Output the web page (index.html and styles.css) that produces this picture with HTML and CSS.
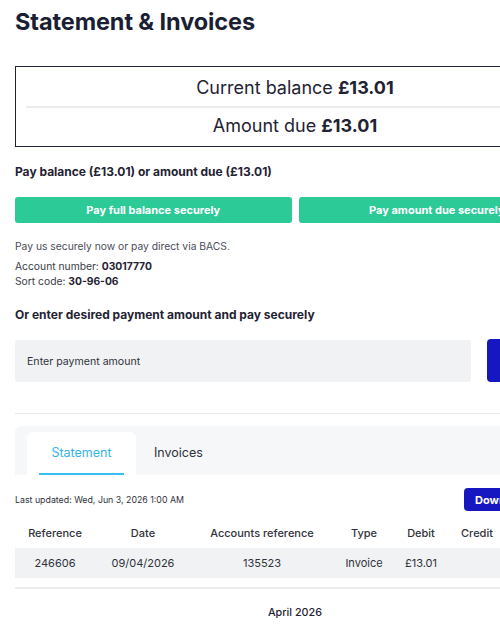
FILE: index.html
```html
<!DOCTYPE html>
<html lang="en">
<head>
<meta charset="utf-8">
<title>Statement &amp; Invoices</title>
<link rel="stylesheet" href="styles.css">
</head>
<body>
<main class="page">
  <h1 class="title">Statement &amp; Invoices</h1>

  <section class="balance">
    <div class="balance-row first">Current balance <strong>£13.01</strong></div>
    <div class="balance-divider"></div>
    <div class="balance-row second">Amount due <strong>£13.01</strong></div>
  </section>

  <h2 class="sub">Pay balance (£13.01) or amount due (£13.01)</h2>

  <div class="pay-buttons">
    <button class="btn-green">Pay full balance securely</button>
    <button class="btn-green">Pay amount due securely</button>
  </div>

  <p class="note">Pay us securely now or pay direct via BACS.</p>
  <p class="bank">Account number: <strong>03017770</strong><br>Sort code: <strong>30-96-06</strong></p>

  <h2 class="sub sub-2">Or enter desired payment amount and pay securely</h2>

  <div class="amount-row">
    <div class="amount-input">Enter payment amount</div>
    <button class="btn-blue big">Pay</button>
  </div>

  <hr class="rule">

  <nav class="tabs">
    <div class="tab active"><span class="tab-label">Statement</span></div>
    <div class="tab"><span class="tab-label">Invoices</span></div>
  </nav>

  <div class="toolbar">
    <span class="updated">Last updated: Wed, Jun 3, 2026 1:00 AM</span>
    <button class="btn-blue small">Download</button>
  </div>

  <table class="statement">
    <colgroup>
      <col class="c1"><col class="c2"><col class="c3"><col class="c4"><col class="c5"><col class="c6"><col class="c7">
    </colgroup>
    <thead>
      <tr><th>Reference</th><th>Date</th><th>Accounts reference</th><th>Type</th><th>Debit</th><th>Credit</th><th>Balance</th></tr>
    </thead>
    <tbody>
      <tr><td>246606</td><td>09/04/2026</td><td>135523</td><td>Invoice</td><td>£13.01</td><td></td><td>£13.01</td></tr>
    </tbody>
  </table>

  <hr class="rule rule-2">

  <div class="month">April 2026</div>
</main>
</body>
</html>
```

FILE: styles.css
```css
*, *::before, *::after {
  box-sizing: border-box;
}

html, body {
  margin: 0;
  padding: 0;
  background: #ffffff;
  overflow: hidden;
}

body {
  font-family: Inter, "Noto Sans", sans-serif;
  color: #2b2f3a;
}

.page {
  width: 590px;
  padding: 7px 15px 0;
}

.title {
  margin: 0;
  font-size: 23.5px;
  line-height: 30px;
  font-weight: 700;
  color: #1a1f33;
  letter-spacing: -0.1px;
}

.balance {
  margin-top: 29px;
  border: 1px solid #1d2337;
  display: flex;
  flex-direction: column;
}

.balance-row {
  text-align: center;
  font-size: 18px;
  line-height: 22px;
  color: #1f2333;
}

.balance-row strong {
  font-weight: 700;
}

.balance-row.first {
  padding: 10px 0 7px;
}

.balance-row.second {
  padding: 7px 0 9px;
}

.balance-divider {
  height: 2px;
  margin: 0 10px;
  background: #ededee;
}

.sub {
  margin: 16px 0 0;
  font-size: 12px;
  line-height: 18px;
  font-weight: 700;
  color: #1f2333;
}

.sub-2 {
  margin-top: 17px;
}

.pay-buttons {
  margin-top: 16px;
  display: grid;
  grid-template-columns: 1fr 1fr;
  gap: 7px;
}

.btn-green {
  height: 26px;
  border: 0;
  border-radius: 3px;
  background: #2cca97;
  color: #ffffff;
  font-family: inherit;
  font-size: 11px;
  font-weight: 700;
  padding: 0;
  white-space: nowrap;
}

.note {
  margin: 15px 0 0;
  font-size: 10.3px;
  line-height: 16px;
  color: #4a4d57;
}

.bank {
  margin: 5px 0 0;
  font-size: 10.3px;
  line-height: 15px;
  color: #3a3d47;
}

.bank strong {
  color: #1f2333;
  font-weight: 700;
}

.amount-row {
  margin-top: 16px;
  display: flex;
  gap: 16px;
}

.amount-input {
  width: 456px;
  height: 42px;
  padding: 0 12px;
  background: #f1f2f4;
  border-radius: 2px;
  display: flex;
  align-items: center;
  font-size: 10.6px;
  color: #2f323b;
}

.btn-blue {
  border: 0;
  border-radius: 4px;
  background: #1717c2;
  color: #ffffff;
  font-family: inherit;
  font-weight: 700;
  font-size: 11px;
  white-space: nowrap;
}

.btn-blue.big {
  flex: 1;
  height: 43px;
  margin-top: -1px;
}

.rule {
  margin: 31px 0 0;
  border: 0;
  height: 1px;
  background: #e6e7e9;
}

.tabs {
  margin-top: 12px;
  background: #f6f7f9;
  border-radius: 6px 6px 0 0;
  padding: 6px 12px 0;
  display: flex;
}

.tab {
  height: 43px;
  display: flex;
  padding: 0 12px;
  border-radius: 6px 6px 0 0;
  font-size: 12.5px;
  color: #2f323b;
}

.tab-label {
  display: flex;
  align-items: center;
  padding: 0 6px;
  border-bottom: 2px solid transparent;
}

.tab.active {
  background: #ffffff;
  width: 109px;
  justify-content: center;
}

.tab.active .tab-label {
  color: #34b3ea;
  padding: 0 12px;
  border-bottom-color: #37bff0;
}

.toolbar {
  margin-top: 13px;
  display: flex;
  justify-content: space-between;
  align-items: center;
}

.updated {
  font-size: 8.8px;
  color: #2f323b;
}

.btn-blue.small {
  width: 111px;
  height: 23px;
  text-align: left;
  padding: 0 11px;
}

.statement {
  margin-top: 7px;
  width: 560px;
  border-collapse: collapse;
  table-layout: fixed;
  font-size: 11px;
}

.c1 { width: 80px; }
.c2 { width: 96px; }
.c3 { width: 142px; }
.c4 { width: 62px; }
.c5 { width: 52px; }
.c6 { width: 60px; }
.c7 { width: 68px; }

.statement th {
  height: 30px;
  padding: 0;
  font-weight: 500;
  color: #2f323b;
  text-align: center;
}

.statement td {
  height: 30px;
  padding: 0;
  background: #f1f2f4;
  color: #2f323b;
  text-align: center;
}

.rule-2 {
  margin-top: 9px;
  height: 2px;
  background: #ececee;
}

.month {
  margin-top: 17px;
  width: 560px;
  text-align: center;
  font-size: 10.8px;
  font-weight: 500;
  color: #1f2333;
}
```
